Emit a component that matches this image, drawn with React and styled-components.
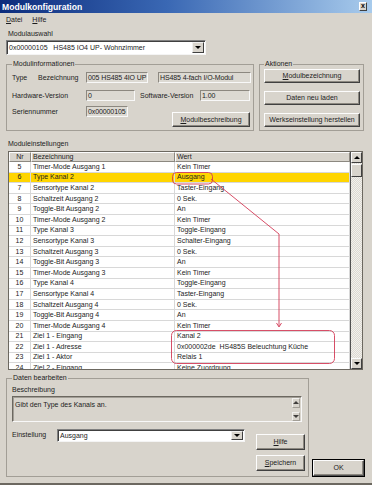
import React from "react";
import styled, { createGlobalStyle } from "styled-components";

const GlobalStyle = createGlobalStyle`
  html, body {
    margin: 0;
    padding: 0;
    background: #d8d4cc;
  }
  body {
    font-family: "Liberation Sans", Arial, sans-serif;
    font-size: 7px;
    line-height: 8px;
    color: #1c1c1c;
  }
  * { box-sizing: border-box; }
`;

const Window = styled.div`
  width: 372px;
  height: 485px;
  background: #d8d4cc;
  display: flex;
  flex-direction: column;
  overflow: hidden;
  border-bottom: 2px solid #6c6860;
`;

const TitleBar = styled.div`
  height: 13px;
  flex-shrink: 0;
  display: flex;
  align-items: center;
  justify-content: space-between;
  padding: 0 5px 0 2px;
  background: linear-gradient(90deg, #0c2c7c 0%, #3a68b4 45%, #a8cbec 100%);
  color: #fff;
  font-size: 8.6px;
  font-weight: bold;
`;

const CloseButton = styled.div`
  width: 8px;
  height: 9px;
  background: #d8d4cc;
  border: 1px solid;
  border-color: #fff #404040 #404040 #fff;
  color: #000;
  font-size: 7px;
  line-height: 6px;
  font-weight: bold;
  text-align: center;
`;

const MenuBar = styled.div`
  height: 13px;
  display: flex;
  align-items: center;
  gap: 10px;
  padding-left: 6px;
`;

const Key = styled.span`
  text-decoration: underline;
`;

const Content = styled.div`
  display: flex;
  flex-direction: column;
  padding-left: 6px;
`;

const Caption = styled.div`
  height: 8px;
  margin: ${(p) => p.$top || 0}px 0 0 ${(p) => p.$left || 0}px;
  white-space: nowrap;
`;

const Combo = styled.div`
  width: ${(p) => p.$w}px;
  height: ${(p) => p.$h}px;
  margin-top: ${(p) => p.$top || 0}px;
  background: #fff;
  border: 1px solid;
  border-color: #808080 #f4f4f4 #f4f4f4 #808080;
  box-shadow: inset 1px 1px 0 #404040;
  display: flex;
  align-items: center;
  justify-content: space-between;
  padding: 0 1px 0 2px;
`;

const DropButton = styled.div`
  width: 12px;
  height: ${(p) => p.$h}px;
  background: #d8d4cc;
  border: 1px solid;
  border-color: #f0f0f0 #404040 #404040 #f0f0f0;
  display: flex;
  align-items: center;
  justify-content: center;
`;

const Arrow = styled.span`
  width: 0;
  height: 0;
  border-left: 3px solid transparent;
  border-right: 3px solid transparent;
  ${(p) =>
    p.$up
      ? "border-bottom: 3px solid #000;"
      : "border-top: 3px solid #000;"}
`;

const GroupRow = styled.div`
  display: flex;
  gap: 5px;
  margin-top: 5px;
`;

const Group = styled.fieldset`
  margin: 0;
  width: ${(p) => p.$w}px;
  padding: 0 1px ${(p) => p.$bottom ?? 3}px ${(p) => p.$left ?? 5}px;
  border: 1px solid #a29e96;
  min-width: 0;
  display: flex;
  flex-direction: column;
`;

const Legend = styled.legend`
  padding: 0 1px;
  height: 8px;
  line-height: 8px;
  font-size: 7px;
`;

const InfoRow = styled.div`
  display: flex;
  align-items: flex-start;
  height: ${(p) => p.$h || 11}px;
  margin-top: ${(p) => p.$top}px;
`;

const Label = styled.div`
  width: ${(p) => p.$w}px;
  margin-left: ${(p) => p.$ml || 0}px;
  height: 11px;
  display: flex;
  align-items: center;
  white-space: nowrap;
  flex-shrink: 0;
`;

const Field = styled.div`
  width: ${(p) => p.$w}px;
  margin-left: ${(p) => p.$ml || 0}px;
  height: 11px;
  flex-shrink: 0;
  background: #dcd9d2;
  border: 1px solid;
  border-color: #8c8880 #f8f8f8 #f8f8f8 #8c8880;
  display: flex;
  align-items: center;
  padding-left: 1px;
  white-space: nowrap;
  letter-spacing: -0.1px;
`;

const Button = styled.div`
  width: ${(p) => p.$w}px;
  height: ${(p) => p.$h || 14}px;
  margin-top: ${(p) => p.$top || 0}px;
  margin-left: ${(p) => p.$ml || 0}px;
  flex-shrink: 0;
  background: #d8d4cc;
  border: 1px solid;
  border-color: #fcfcfc #404040 #404040 #fcfcfc;
  box-shadow: inset -1px -1px 0 #8c8880;
  display: flex;
  align-items: center;
  justify-content: center;
  white-space: nowrap;
`;

const DefaultButton = styled(Button)`
  outline: 1px solid #000;
  outline-offset: 0;
  border-color: #fcfcfc #505050 #505050 #fcfcfc;
  align-self: flex-end;
  margin-bottom: 1px;
`;

const TableFrame = styled.div`
  position: relative;
  width: 355px;
  height: 219px;
  margin: 3px 0 0 2px;
  border: 1px solid #6c6860;
  background: #fff;
  display: flex;
`;

const ListArea = styled.div`
  width: 341px;
  display: flex;
  flex-direction: column;
`;

const columns = "22px 144px 1fr";

const HeaderRow = styled.div`
  display: grid;
  grid-template-columns: ${columns};
  height: 10px;
  flex-shrink: 0;
`;

const HeaderCell = styled.div`
  background: #d8d4cc;
  border: 1px solid;
  border-color: #fcfcfc #8c8880 #8c8880 #fcfcfc;
  display: flex;
  align-items: center;
  justify-content: ${(p) => (p.$center ? "center" : "flex-start")};
  padding-left: ${(p) => (p.$center ? 0 : 1)}px;
`;

const Body = styled.div`
  height: 207px;
  overflow: hidden;
`;

const DataRow = styled.div`
  display: grid;
  grid-template-columns: ${columns};
  height: 10.6px;
  background: ${(p) => (p.$selected ? "#ffd500" : "#fff")};
  border-bottom: 1px solid #d8d8d8;
`;

const Cell = styled.div`
  display: flex;
  align-items: center;
  justify-content: ${(p) => (p.$center ? "center" : "flex-start")};
  padding-left: ${(p) => (p.$center ? 0 : 2)}px;
  border-right: 1px solid #d8d8d8;
  white-space: nowrap;
  overflow: hidden;
`;

const ScrollBar = styled.div`
  width: 12px;
  display: flex;
  flex-direction: column;
  background: repeating-conic-gradient(#f2f0ec 0 25%, #dcd9d2 0 50%) 0 0 / 2px 2px;
  border-left: 1px solid #505050;
`;

const ScrollButton = styled.div`
  height: ${(p) => p.$h}px;
  margin-top: ${(p) => p.$top || 0}px;
  background: #d8d4cc;
  border: 1px solid;
  border-color: #fcfcfc #404040 #404040 #fcfcfc;
  display: flex;
  align-items: center;
  justify-content: center;
`;

const Spacer = styled.div`
  flex: 1;
`;

const Annotation = styled.svg`
  position: absolute;
  left: 0;
  top: 0;
  width: 353px;
  height: 217px;
  pointer-events: none;
`;

const BottomArea = styled.div`
  display: flex;
  margin-top: 4px;
`;

const DescBox = styled.div`
  width: 290px;
  height: 26px;
  margin-top: 2px;
  border: 1px solid;
  border-color: #6c6860 #f8f8f8 #f8f8f8 #6c6860;
  box-shadow: inset 1px 1px 0 #a29e96;
  display: flex;
  justify-content: space-between;
  padding: 4px 0 0 2px;
`;

const MiniScroll = styled.div`
  width: 8px;
  margin-top: -3px;
  margin-right: 1px;
  display: flex;
  flex-direction: column;
  gap: 4px;
`;

const MiniButton = styled.div`
  height: 10px;
  background: #d8d4cc;
  border: 1px solid;
  border-color: #fcfcfc #8c8880 #8c8880 #fcfcfc;
  display: flex;
  align-items: center;
  justify-content: center;
  opacity: 0.7;
`;

const EditRow = styled.div`
  display: flex;
  align-items: flex-start;
  margin-top: 7px;
`;

const ButtonColumn = styled.div`
  display: flex;
  flex-direction: column;
  margin-left: 11px;
`;

const rows = [
  [5, "Timer-Mode Ausgang 1", "Kein Timer"],
  [6, "Type Kanal 2", "Ausgang"],
  [7, "Sensortype Kanal 2", "Taster-Eingang"],
  [8, "Schaltzeit Ausgang 2", "0 Sek."],
  [9, "Toggle-Bit Ausgang 2", "An"],
  [10, "Timer-Mode Ausgang 2", "Kein Timer"],
  [11, "Type Kanal 3", "Toggle-Eingang"],
  [12, "Sensortype Kanal 3", "Schalter-Eingang"],
  [13, "Schaltzeit Ausgang 3", "0 Sek."],
  [14, "Toggle-Bit Ausgang 3", "An"],
  [15, "Timer-Mode Ausgang 3", "Kein Timer"],
  [16, "Type Kanal 4", "Toggle-Eingang"],
  [17, "Sensortype Kanal 4", "Taster-Eingang"],
  [18, "Schaltzeit Ausgang 4", "0 Sek."],
  [19, "Toggle-Bit Ausgang 4", "An"],
  [20, "Timer-Mode Ausgang 4", "Kein Timer"],
  [21, "Ziel 1 - Eingang", "Kanal 2"],
  [22, "Ziel 1 - Adresse", "0x000002de\u00a0\u00a0HS485S Beleuchtung Küche"],
  [23, "Ziel 1 - Aktor", "Relais 1"],
  [24, "Ziel 2 - Eingang", "Keine Zuordnung"],
];

export default function App() {
  return (
    <>
      <GlobalStyle />
      <Window>
        <TitleBar>
          <span>Modulkonfiguration</span>
          <CloseButton>x</CloseButton>
        </TitleBar>
        <MenuBar>
          <span>
            <Key>D</Key>atei
          </span>
          <span>
            <Key>H</Key>ilfe
          </span>
        </MenuBar>

        <Content>
          <Caption $top={4} $left={2}>
            Modulauswahl
          </Caption>
          <Combo $w={200} $h={15} $top={2}>
            <span>0x00000105&nbsp;&nbsp;&nbsp;HS485 IO4 UP- Wohnzimmer</span>
            <DropButton $h={11}>
              <Arrow />
            </DropButton>
          </Combo>

          <GroupRow>
            <Group $w={248}>
              <Legend>Modulinformationen</Legend>
              <InfoRow $top={4}>
                <Label $w={26}>Type</Label>
                <Label $w={48}>Bezeichnung</Label>
                <Field $w={62}>005 HS485 4IO UP</Field>
                <Field $w={93} $ml={10}>
                  HS485 4-fach I/O-Modul
                </Field>
              </InfoRow>
              <InfoRow $top={7}>
                <Label $w={74}>Hardware-Version</Label>
                <Field $w={49}>0</Field>
                <Label $w={60} $ml={5}>
                  Software-Version
                </Label>
                <Field $w={50}>1.00</Field>
              </InfoRow>
              <InfoRow $top={5} $h={21}>
                <Label $w={74}>Seriennummer</Label>
                <Field $w={42}>0x00000105</Field>
                <Button $w={78} $h={15} $top={6} $ml={44}>
                  <Key>M</Key>odulbeschreibung
                </Button>
              </InfoRow>
            </Group>

            <Group $w={105} $left={4}>
              <Legend>Aktionen</Legend>
              <Button $w={96} $top={1}>
                <Key>M</Key>odulbezeichnung
              </Button>
              <Button $w={96} $top={8}>
                Daten neu laden
              </Button>
              <Button $w={96} $top={8}>
                Werkseinstellung herstellen
              </Button>
            </Group>
          </GroupRow>

          <Caption $top={9} $left={2}>
            Moduleinstellungen
          </Caption>
          <TableFrame>
            <ListArea>
              <HeaderRow>
                <HeaderCell $center>Nr</HeaderCell>
                <HeaderCell>Bezeichnung</HeaderCell>
                <HeaderCell>Wert</HeaderCell>
              </HeaderRow>
              <Body>
                {rows.map(([nr, name, value]) => (
                  <DataRow key={nr} $selected={nr === 6}>
                    <Cell $center>{nr}</Cell>
                    <Cell>{name}</Cell>
                    <Cell>{value}</Cell>
                  </DataRow>
                ))}
              </Body>
            </ListArea>
            <ScrollBar>
              <ScrollButton $h={11}>
                <Arrow $up />
              </ScrollButton>
              <ScrollButton $h={13} $top={1} />
              <Spacer />
              <ScrollButton $h={11}>
                <Arrow />
              </ScrollButton>
            </ScrollBar>
            <Annotation viewBox="0 0 353 217">
              <g fill="none" stroke="#d23a56" strokeWidth="0.9">
                <rect x="163.5" y="20.5" width="40" height="11.5" rx="4" />
                <polyline points="202,27 270,82 270,174" />
                <polyline points="267.5,171 270,175 272.5,171" />
                <rect x="162.5" y="178.5" width="163" height="33" rx="5" />
              </g>
            </Annotation>
          </TableFrame>

          <BottomArea>
            <Group $w={303} $bottom={5}>
              <Legend>Daten bearbeiten</Legend>
              <Caption $top={4}>Beschreibung</Caption>
              <DescBox>
                <span>Gibt den Type des Kanals an.</span>
                <MiniScroll>
                  <MiniButton>
                    <Arrow $up />
                  </MiniButton>
                  <MiniButton>
                    <Arrow />
                  </MiniButton>
                </MiniScroll>
              </DescBox>
              <EditRow>
                <Label $w={45}>Einstellung</Label>
                <Combo $w={188} $h={13}>
                  <span>Ausgang</span>
                  <DropButton $h={9}>
                    <Arrow />
                  </DropButton>
                </Combo>
                <ButtonColumn>
                  <Button $w={49} $h={16} $top={5}>
                    <Key>H</Key>ilfe
                  </Button>
                  <Button $w={49} $h={16} $top={5}>
                    <Key>S</Key>peichern
                  </Button>
                </ButtonColumn>
              </EditRow>
            </Group>
            <DefaultButton $w={51} $h={16} $ml={4}>
              OK
            </DefaultButton>
          </BottomArea>
        </Content>
      </Window>
    </>
  );
}
